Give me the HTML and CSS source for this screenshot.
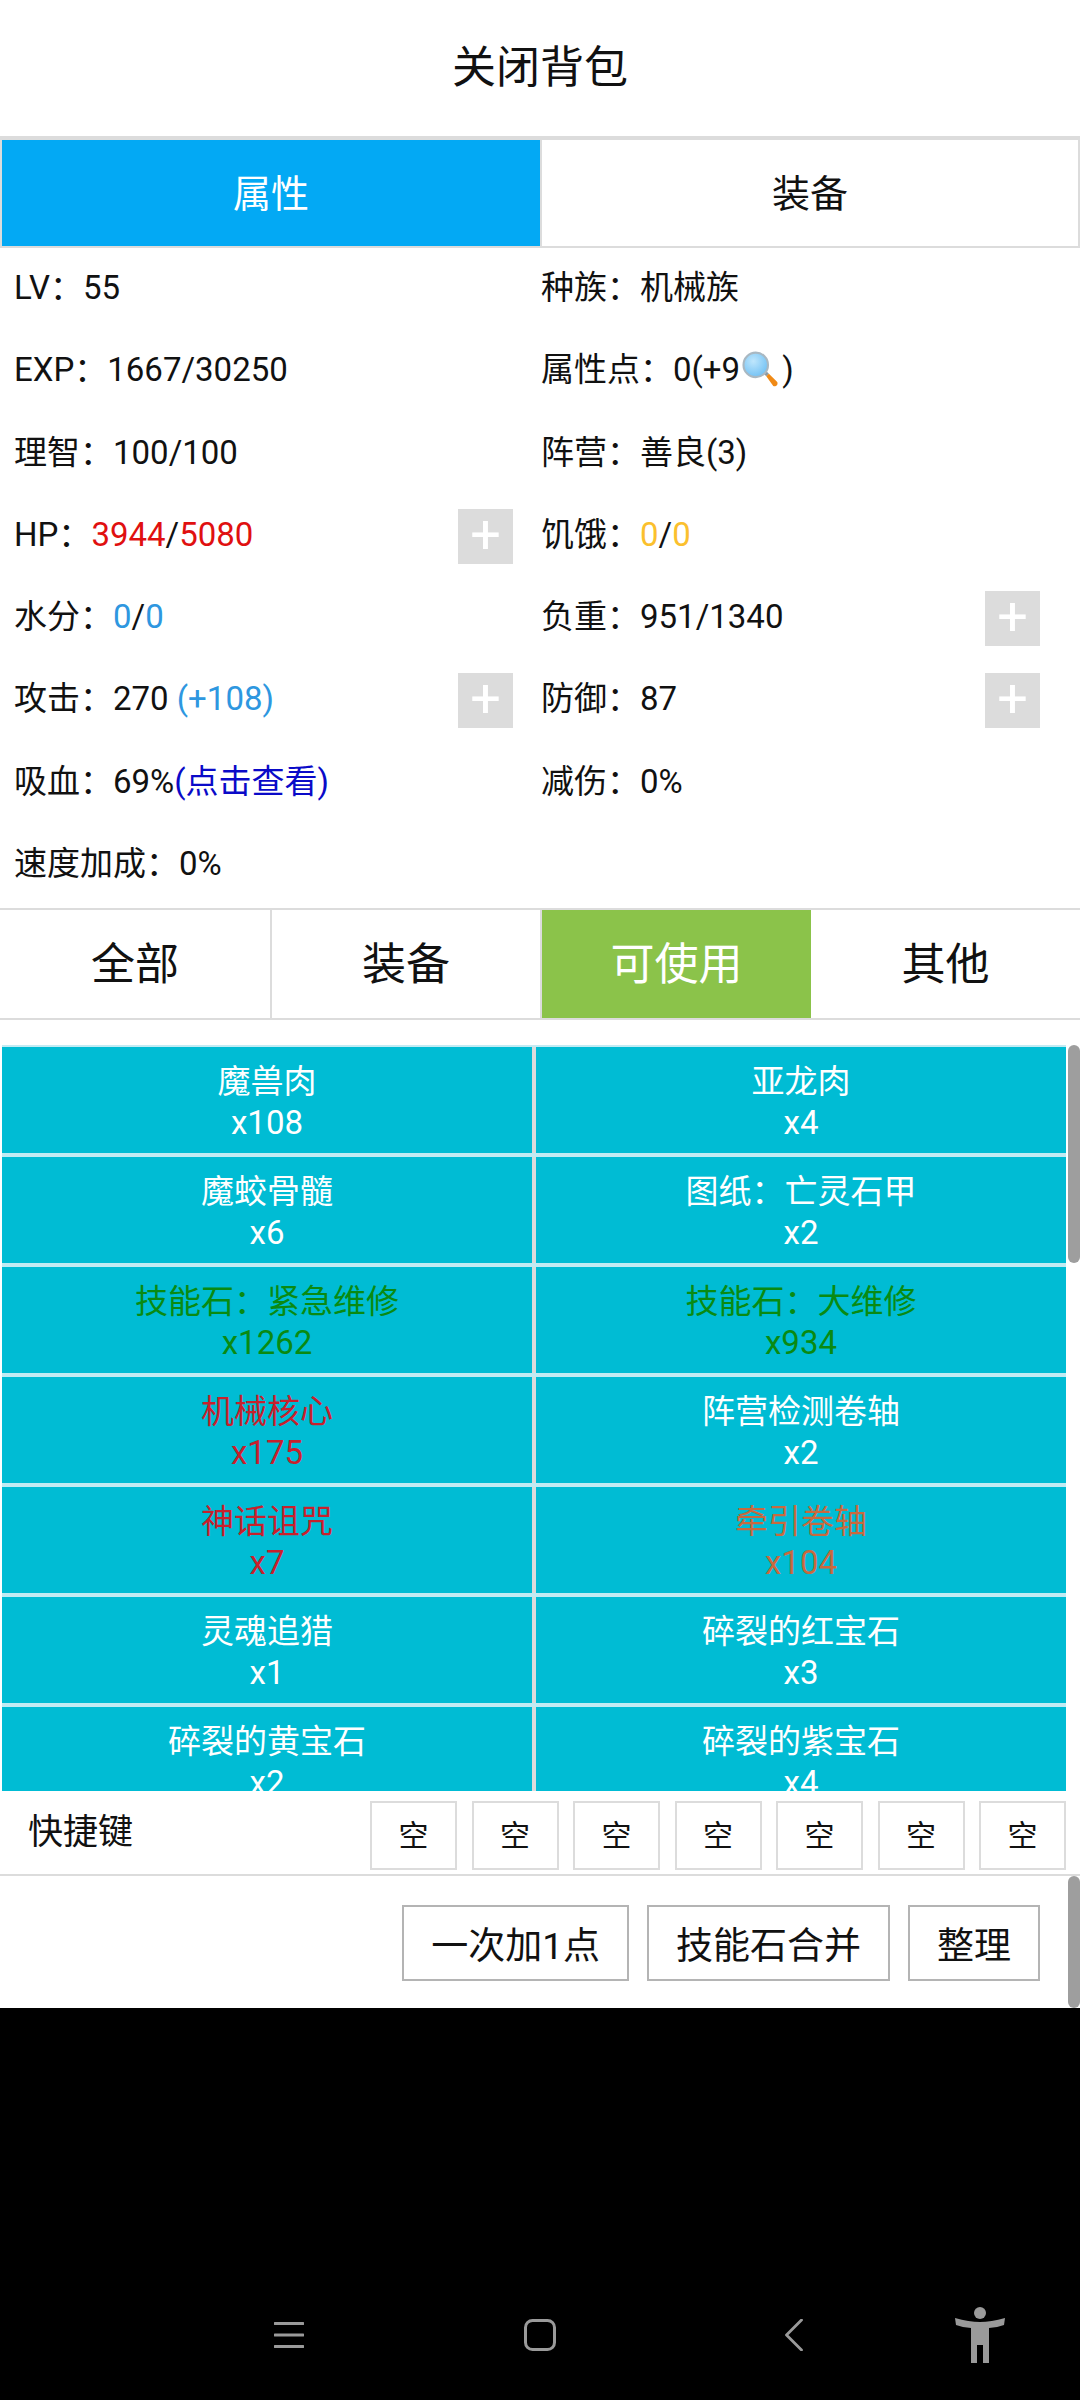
FILE: index.html
```
<!DOCTYPE html>
<html lang="zh-CN">
<head>
<meta charset="utf-8">
<title>背包</title>
<link rel="stylesheet" href="styles.css">
</head>
<body>
<main class="screen">
  <h1 class="title">关闭背包</h1>
  <nav class="tabs">
    <div class="tab tab-on">属性</div>
    <div class="tab">装备</div>
  </nav>
  <section class="stats">
    <div class="stat">LV：55</div>
    <div class="stat">种族：机械族</div>
    <div class="stat">EXP：1667/30250</div>
    <div class="stat">属性点：0(+9<svg class="lens" viewBox="-3 -3 48 48"><defs><radialGradient id="glass" cx="0.4" cy="0.35" r="0.7"><stop offset="0" stop-color="#bfe6fc"/><stop offset="1" stop-color="#6fc0f4"/></radialGradient></defs><path d="M24 24l3-3 3 3-3 3z" fill="#8d9aa3"/><path d="M27 27l3-3 9 9a3 3 0 0 1-1 5 3 3 0 0 1-3 0z" fill="#f08a16"/><circle cx="15" cy="14" r="14" fill="url(#glass)" stroke="#a9b8c2" stroke-width="2.400"/></svg>)</div>
    <div class="stat">理智：100/100</div>
    <div class="stat">阵营：善良(3)</div>
    <div class="stat">HP：<span class="red">3944</span>/<span class="red">5080</span><span class="plus">+</span></div>
    <div class="stat">饥饿：<span class="amber">0</span>/<span class="amber">0</span></div>
    <div class="stat">水分：<span class="sky">0</span>/<span class="sky">0</span></div>
    <div class="stat">负重：951/1340<span class="plus">+</span></div>
    <div class="stat">攻击：270 <span class="sky">(+108)</span><span class="plus">+</span></div>
    <div class="stat">防御：87<span class="plus">+</span></div>
    <div class="stat">吸血：69%<span class="navy">(点击查看)</span></div>
    <div class="stat">减伤：0%</div>
    <div class="stat">速度加成：0%</div>
  </section>
  <nav class="filters">
    <div class="filter">全部</div>
    <div class="filter">装备</div>
    <div class="filter filter-on">可使用</div>
    <div class="filter">其他</div>
  </nav>
  <section class="bag">
    <div class="items">
      <div class="item">魔兽肉<br>x108</div>
      <div class="item">亚龙肉<br>x4</div>
      <div class="item">魔蛟骨髓<br>x6</div>
      <div class="item">图纸：亡灵石甲<br>x2</div>
      <div class="item green">技能石：紧急维修<br>x1262</div>
      <div class="item green">技能石：大维修<br>x934</div>
      <div class="item crimson">机械核心<br>x175</div>
      <div class="item">阵营检测卷轴<br>x2</div>
      <div class="item crimson">神话诅咒<br>x7</div>
      <div class="item rust">牵引卷轴<br>x104</div>
      <div class="item">灵魂追猎<br>x1</div>
      <div class="item">碎裂的红宝石<br>x3</div>
      <div class="item">碎裂的黄宝石<br>x2</div>
      <div class="item">碎裂的紫宝石<br>x4</div>
    </div>
    <div class="thumb thumb-bag"></div>
  </section>
  <section class="keys">
    <div class="keys-label">快捷键</div>
    <div class="slots">
      <div class="slot">空</div><div class="slot">空</div><div class="slot">空</div><div class="slot">空</div><div class="slot">空</div><div class="slot">空</div><div class="slot">空</div>
    </div>
  </section>
  <section class="actions">
    <button class="action">一次加1点</button>
    <button class="action">技能石合并</button>
    <button class="action">整理</button>
    <div class="thumb thumb-actions"></div>
  </section>
</main>
<footer class="sysbar">
  <svg class="sys sys-menu" viewBox="0 0 30 28"><path d="M1 2.500h28M1 14h28M1 25.500h28" stroke="#9a9a9a" stroke-width="3.200" stroke-linecap="round" fill="none"/></svg>
  <svg class="sys sys-home" viewBox="0 0 32 32"><rect x="1.500" y="1.500" width="29" height="29" rx="7" stroke="#9a9a9a" stroke-width="3" fill="none"/></svg>
  <svg class="sys sys-back" viewBox="0 0 18 32"><path d="M16.500 1L1.500 16l15 15" stroke="#9a9a9a" stroke-width="2.800" stroke-linecap="round" stroke-linejoin="round" fill="none"/></svg>
  <svg class="sys sys-person" viewBox="0 0 50 56"><circle cx="25" cy="6" r="6" fill="#9a9a9a"/><path d="M0 11q14 4 25 4t25-4l-1 7q-8 3-15 3v35h-6V38h-6v18h-6V21q-7 0-15-3z" fill="#9a9a9a"/></svg>
</footer>
</body>
</html>
```
FILE: styles.css
```
* { box-sizing: border-box; }
html, body { margin: 0; background: #000; }
body {
  width: 1080px;
  height: 2400px;
  font-family: Roboto, "Noto Sans CJK SC", sans-serif;
  color: #111;
  overflow: hidden;
}
.screen { height: 2008px; background: #fff; display: flex; flex-direction: column; }

.title {
  margin: 0;
  height: 136px;
  font-size: 44px;
  font-weight: 400;
  line-height: 137px;
  text-align: center;
}
.tabs {
  display: grid;
  grid-template-columns: 540px 540px;
  grid-template-rows: 106px;
  height: 112px;
  border-top: 4px solid #dcdcdc;
  border-bottom: 2px solid #dcdcdc;
}
.tab {
  font-size: 38px;
  line-height: 108px;
  text-align: center;
  border-left: 2px solid #dcdcdc;
  border-right: 2px solid #dcdcdc;
}
.tab-on { background: #03a9f4; color: #fff; border-right: 0; }

.stats {
  display: grid;
  grid-template-columns: 499px 499px;
  grid-auto-rows: 82.300px;
  column-gap: 28px;
  height: 662px;
  padding-left: 14px;
  margin-top: -2px;
  font-size: 33px;
  line-height: 83px;
}
.stat { white-space: pre; position: relative; }
.plus {
  position: absolute;
  right: 0;
  top: 16px;
  width: 55px;
  height: 55px;
  background: #dcdcdc;
  color: #fff;
  font-size: 54px;
  line-height: 52px;
  text-align: center;
}
.lens { width: 42px; height: 42px; vertical-align: -11px; }
.red { color: #e01010; }
.amber { color: #fbc02d; }
.sky { color: #2e97e0; }
.navy { color: #0a0ac8; }

.filters {
  display: grid;
  grid-template-columns: 272px 270px 269px 269px;
  grid-template-rows: 108px;
  height: 112px;
  border-top: 2px solid #dcdcdc;
  border-bottom: 2px solid #dcdcdc;
}
.filter { font-size: 44px; line-height: 111px; text-align: center; border-right: 2px solid #dcdcdc; }
.filter:nth-child(n+3) { border-right: 0; }
.filter-on { background: #8bc34a; color: #fff; }

.bag { position: relative; margin-top: 25px; height: 746px; overflow: hidden; }
.items {
  display: grid;
  grid-template-columns: 534px 530px;
  grid-auto-rows: 106px;
  row-gap: 4px;
  width: 1064px;
  margin-left: 2px;
  padding-top: 2px;
  background: #c2ebf3;
}
.item {
  background: #00bcd4;
  color: #fff;
  font-size: 33px;
  line-height: 41px;
  padding-top: 14px;
  text-align: center;
}
.item:nth-child(odd) { border-right: 4px solid #dcdcdc; }
.green { color: #0a8a12; }
.crimson { color: #c8202c; }
.rust { color: #c86a3e; }

.thumb { position: absolute; right: 0; width: 12px; background: #9e9e9e; border-radius: 6px; }
.thumb-bag { top: 0; height: 218px; }
.thumb-actions { top: 0; height: 132px; }

.keys {
  display: flex;
  align-items: center;
  justify-content: space-between;
  height: 85px;
  padding: 0 14px 0 28px;
  border-bottom: 2px solid #dcdcdc;
}
.keys-label { font-size: 35px; margin-top: -9px; }
.slots { display: flex; gap: 14.500px; margin-top: 5px; }
.slot {
  width: 87px;
  height: 69px;
  border: 2px solid #dcdcdc;
  font-size: 30px;
  line-height: 65px;
  text-align: center;
}

.actions {
  position: relative;
  flex: 1;
  display: flex;
  justify-content: flex-end;
  gap: 18px;
  padding: 29px 40px 0 0;
}
.action {
  height: 76px;
  padding: 0 27px;
  border: 2px solid #b4b4b4;
  background: #fff;
  color: #111;
  font: inherit;
  font-size: 37px;
}

.sysbar { position: relative; height: 392px; }
.sys { position: absolute; }
.sys-menu { left: 274px; top: 313px; width: 30px; height: 28px; }
.sys-home { left: 524px; top: 311px; width: 32px; height: 32px; }
.sys-back { left: 785px; top: 311px; width: 18px; height: 32px; }
.sys-person { left: 955px; top: 299px; width: 50px; height: 56px; }
```
